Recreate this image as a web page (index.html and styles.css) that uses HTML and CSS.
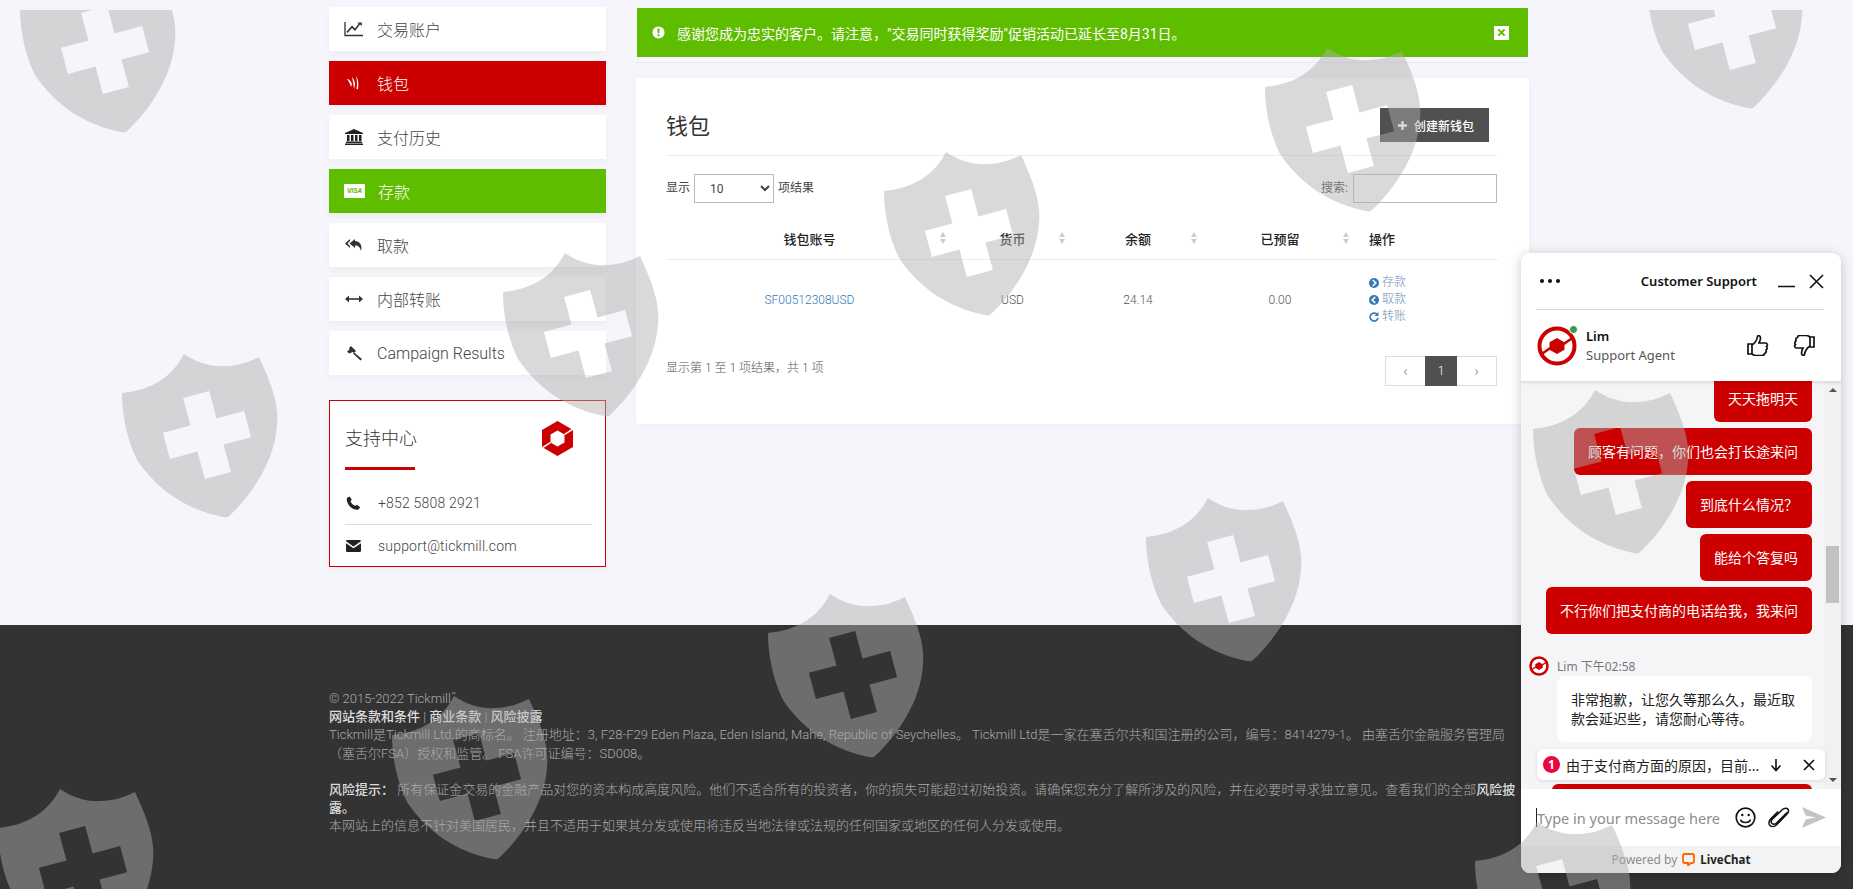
FILE: index.html
```html
<!DOCTYPE html>
<html lang="zh-CN">
<head>
  <meta charset="UTF-8" />
  <title>钱包 - Tickmill</title>
  <link rel="stylesheet" href="styles.css">
</head>
<body>
  <div class="wrap">
    <aside class="side">
      <ul class="menu">
        <li class="menu-item">
          <svg class="menu-icon" viewBox="0 0 20 16"><path d="M1 1v13.5h18" fill="none" stroke="#333" stroke-width="1.3"/><path d="M3.5 12l4.5-5 3 3 5-6.5 1.8 1.6V1.5h-4.5l1.3 1.3-3.6 4.7-3-3-5.6 6.3z" fill="#333"/></svg>
          <span>交易账户</span>
        </li>
        <li class="menu-item is-red">
          <svg class="menu-icon" viewBox="0 0 20 16"><path d="M3 4c2 0 4 2 5 5l-1 3C6 9 5 6 3 4zM8 2c2 2 3 5 3 8l-1 4c-.5-4-1-8-2-12zM12 1c2 3 3 7 2 13h-1.500c.8-5 .5-9-.5-13z" fill="#fff"/></svg>
          <span>钱包</span>
        </li>
        <li class="menu-item">
          <svg class="menu-icon" viewBox="0 0 20 16"><path d="M10 0l9 4v1H1V4zM3 6h2.500v6H3zM7 6h2.500v6H7zM11 6h2.500v6H11zM15 6h2.500v6H15zM2 12.500h16V14H2zM1 14.500h18V16H1z" fill="#222"/></svg>
          <span>支付历史</span>
        </li>
        <li class="menu-item is-green">
          <span class="visa">VISA</span>
          <span>存款</span>
        </li>
        <li class="menu-item">
          <svg class="menu-icon" viewBox="0 0 20 16"><path d="M6 2L1 6.500 6 11V9L3.500 6.500 6 4zM11 2L5.500 6.500 11 11V8.500c3.500 0 5 1.500 6 5.500 1.500-5-.5-9.500-6-10z" fill="#333"/></svg>
          <span>取款</span>
        </li>
        <li class="menu-item">
          <svg class="menu-icon" viewBox="0 0 20 16"><path d="M2 7.200h16v1.600H2z" fill="#333"/><path d="M5 4.500v7L1 8zM15 4.500v7L19 8z" fill="#333"/></svg>
          <span>内部转账</span>
        </li>
        <li class="menu-item">
          <svg class="menu-icon" viewBox="0 0 20 16"><path d="M7 1l5 5-2 2-1-1-4 1.500L3 6.500l2.500-2L5 3zM10 7.500l8 6.500-1.500 1.500-7.500-7z" fill="#333"/></svg>
          <span>Campaign Results</span>
        </li>
      </ul>

      <div class="support">
        <div class="support-head">
          <h3>支持中心</h3>
          <svg class="support-logo" viewBox="0 0 31 35"><path d="M15.500 0L31 9v17l-15.500 9L0 26V9z" fill="#c00"/><path d="M15.500 9.500l7 4v8l-7 4-7-4v-8z" fill="#fff"/><path d="M22 13l9-6v2l-8 5zM9 22l-9 6v-2l8-5z" fill="#fff"/></svg>
        </div>
        <div class="support-line"></div>
        <div class="support-row">
          <svg class="support-icon" viewBox="0 0 14 14"><path d="M3 .5L5.300 3.800 4 5.300c.8 2 2.400 3.700 4.700 4.700l1.500-1.300L13.500 11c-.3 1.500-1.500 2.800-3 2.800C5 13.300.7 9 .2 3.500.2 2 1.500.8 3 .5z" fill="#222"/></svg>
          <span>+852 5808 2921</span>
        </div>
        <div class="support-row">
          <svg class="support-icon" viewBox="0 0 16 13"><path d="M0 1.500A1.500 1.500 0 0 1 1.500 0h13A1.500 1.500 0 0 1 16 1.500L8 7zM0 3.500L8 9l8-5.500v8a1.500 1.500 0 0 1-1.500 1.500h-13A1.500 1.500 0 0 1 0 11.500z" fill="#222"/></svg>
          <span>support@tickmill.com</span>
        </div>
      </div>
    </aside>

    <main class="content">
      <div class="alert-box">
        <div class="alert">
          <svg class="alert-icon" viewBox="0 0 14 14"><circle cx="7" cy="7" r="6.500" fill="#fff"/><path d="M5.800 2.800h2.400l-.3 5H6.100zM5.900 9h2.200v2.100H5.900z" fill="#5dbd00"/></svg>
          <span class="alert-text">感谢您成为忠实的客户。请注意，"交易同时获得奖励"促销活动已延长至8月31日。</span>
          <span class="alert-close">
            <svg viewBox="0 0 10 10"><path d="M1.500 1.500l7 7m0-7l-7 7" stroke="#5dbd00" stroke-width="2.200"/></svg>
          </span>
        </div>
      </div>

      <section class="panel">
        <div class="panel-head">
          <h2>钱包</h2>
          <a class="btn-new">
            <svg viewBox="0 0 10 10"><path d="M3.700 0h2.600v3.700H10v2.600H6.300V10H3.700V6.300H0V3.700h3.700z" fill="#fff"/></svg>
            创建新钱包
          </a>
        </div>

        <div class="controls">
          <label class="length">显示
            <select><option>10</option><option>25</option></select>
            项结果
          </label>
          <label class="search">搜索:
            <input type="text" />
          </label>
        </div>

        <table class="wallets">
          <thead>
            <tr>
              <th class="col-acc">钱包账号<span class="sort"></span></th>
              <th class="col-cur">货币<span class="sort"></span></th>
              <th class="col-bal">余额<span class="sort"></span></th>
              <th class="col-res">已预留<span class="sort"></span></th>
              <th class="col-act">操作</th>
            </tr>
          </thead>
          <tbody>
            <tr>
              <td><a>SF00512308USD</a></td>
              <td>USD</td>
              <td>24.14</td>
              <td>0.00</td>
              <td class="actions">
                <a><svg viewBox="0 0 10 10"><circle cx="5" cy="5" r="5" fill="#337ab7"/><path d="M3.800 2l3 3-3 3" fill="none" stroke="#fff" stroke-width="1.600"/></svg>存款</a>
                <a><svg viewBox="0 0 10 10"><circle cx="5" cy="5" r="5" fill="#337ab7"/><path d="M6.200 2l-3 3 3 3" fill="none" stroke="#fff" stroke-width="1.600"/></svg>取款</a>
                <a><svg viewBox="0 0 10 10"><path d="M8.300 2.600A4 4 0 1 0 9 6" fill="none" stroke="#337ab7" stroke-width="1.700"/><path d="M9.500 0v4h-4z" fill="#337ab7"/></svg>转账</a>
              </td>
            </tr>
          </tbody>
        </table>

        <div class="table-foot">
          <span class="info">显示第 1 至 1 项结果，共 1 项</span>
          <div class="pager">
            <span class="pg-prev">‹</span>
            <span class="pg-cur">1</span>
            <span class="pg-next">›</span>
          </div>
        </div>
      </section>
    </main>
  </div>

  <footer class="foot">
    <p>© 2015-2022 Tickmill<sup>™</sup><br>
    <a>网站条款和条件</a> | <a>商业条款</a> | <a>风险披露</a><br>
    Tickmill是Tickmill Ltd.的商标名。 注册地址：3, F28-F29 Eden Plaza, Eden Island, Mahe, Republic of Seychelles。 Tickmill Ltd是一家在塞舌尔共和国注册的公司，编号：8414279-1。 由塞舌尔金融服务管理局（塞舌尔FSA）授权和监管。 FSA许可证编号：SD008。</p>
    <p><b>风险提示：</b> 所有保证金交易的金融产品对您的资本构成高度风险。他们不适合所有的投资者，你的损失可能超过初始投资。请确保您充分了解所涉及的风险，并在必要时寻求独立意见。查看我们的全部<b>风险披露。</b><br>
    本网站上的信息不针对美国居民，并且不适用于如果其分发或使用将违反当地法律或法规的任何国家或地区的任何人分发或使用。</p>
  </footer>

  <!-- chat widget -->
  <div class="chat">
    <div class="chat-top">
      <div class="chat-bar">
        <span class="dots"><i></i><i></i><i></i></span>
        <span class="chat-title">Customer Support</span>
        <span class="chat-win">
          <svg width="17" height="14" viewBox="0 0 17 14"><path d="M0 12.500h17" stroke="#111" stroke-width="1.600"/></svg>
          <svg width="15" height="15" viewBox="0 0 15 15"><path d="M1 1l13 13M14 1L1 14" stroke="#111" stroke-width="1.600"/></svg>
        </span>
      </div>
      <div class="agent">
        <span class="agent-pic">
          <svg viewBox="0 0 40 40"><circle cx="20" cy="20" r="17.500" fill="#fff" stroke="#c00" stroke-width="4"/><path d="M20 12l7.500 4.300v7.400L20 28l-7.500-4.300v-7.400z" fill="#c00"/><path d="M26 17l10-7 1.500 2-10 7zM14 23l-10 7-1.500-2 10-7z" fill="#c00"/></svg>
          <i class="online"></i>
        </span>
        <div class="agent-name">
          <b>Lim</b>
          <span>Support Agent</span>
        </div>
        <span class="rate">
          <svg width="22" height="21" viewBox="0 0 22 21"><path d="M1 9h4v10H1zM5 10c3-2 5-5 5.500-8.500.3-1.500 3-1 3 1.500 0 2-1 4-1.500 5h6.500c2 0 2.500 2.500 1 3.500 1 1 .8 3-.5 3.500.5 1.500 0 3-1.500 3.500 0 1.500-1 2-2.500 2H9c-2 0-3-1-4-1.500" fill="none" stroke="#111" stroke-width="1.700"/></svg>
          <svg width="22" height="21" viewBox="0 0 22 21"><path d="M21 12h-4V2h4zM17 11c-3 2-5 5-5.500 8.500-.3 1.500-3 1-3-1.500 0-2 1-4 1.500-5H3.500c-2 0-2.500-2.500-1-3.500-1-1-.8-3 .5-3.500C2.500 4.500 3 3 4.500 2.500 4.500 1 5.500.5 7 .5h6c2 0 3 1 4 1.500" fill="none" stroke="#111" stroke-width="1.700"/></svg>
        </span>
      </div>
    </div>

    <div class="chat-body">
      <div class="msgs">
        <div class="bubble">天天拖明天</div>
        <div class="bubble">顾客有问题，你们也会打长途来问</div>
        <div class="bubble">到底什么情况？</div>
        <div class="bubble">能给个答复吗</div>
        <div class="bubble">不行你们把支付商的电话给我，我来问</div>
        <div class="msg-meta">
          <svg viewBox="0 0 40 40"><circle cx="20" cy="20" r="17" fill="#fff" stroke="#c00" stroke-width="5"/><path d="M20 12l7.500 4.300v7.400L20 28l-7.500-4.300v-7.400z" fill="#c00"/><path d="M26 17l10-7 1.500 2-10 7zM14 23l-10 7-1.500-2 10-7z" fill="#c00"/></svg>
          <span>Lim 下午02:58</span>
        </div>
        <div class="bubble-in">非常抱歉，让您久等那么久，最近取款会延迟些，请您耐心等待。</div>
        <div class="bubble bubble-last">由于支付商方面的原因，目前款项</div>
      </div>
      <div class="scroll">
        <i class="scroll-up"></i>
        <i class="scroll-thumb"></i>
        <i class="scroll-down"></i>
      </div>
      <div class="pill">
        <span class="pill-num">1</span>
        <span class="pill-text">由于支付商方面的原因，目前...</span>
        <svg width="12" height="14" viewBox="0 0 12 14"><path d="M6 1v11M1.500 7.500L6 12.500l4.500-5" fill="none" stroke="#111" stroke-width="1.600"/></svg>
        <svg width="12" height="12" viewBox="0 0 12 12"><path d="M1 1l10 10M11 1L1 11" stroke="#111" stroke-width="1.600"/></svg>
      </div>
    </div>

    <div class="composer">
      <span class="caret"></span>
      <span class="holder">Type in your message here</span>
      <svg width="21" height="21" viewBox="0 0 21 21"><circle cx="10.500" cy="10.500" r="9.300" fill="none" stroke="#111" stroke-width="1.700"/><circle cx="7.300" cy="8" r="1.200" fill="#111"/><circle cx="13.700" cy="8" r="1.200" fill="#111"/><path d="M5.500 12.500c1 4 9 4 10 0" fill="none" stroke="#111" stroke-width="1.500"/></svg>
      <svg width="22" height="21" viewBox="0 0 22 21"><path d="M19 5.500L8.500 16c-1.500 1.500-3.500 1.500-4.500.5s-1-3 .5-4.500L14.500 2.500c2-2 4.500-1.500 5.300-.5s1 3-.8 5L9 17.500C6.500 20 3.500 20 2 18.500s-1.500-4.500 1-7L10 4.500" fill="none" stroke="#111" stroke-width="1.500"/></svg>
      <svg class="send" width="24" height="21" viewBox="0 0 24 21"><path d="M0 0l24 10.500L0 21l3.500-8.500L14 10.500 3.500 8.500z" fill="#c4c4c4"/></svg>
    </div>
    <div class="powered">
      <span>Powered by</span>
      <svg width="13" height="13" viewBox="0 0 13 13"><path d="M2.500 1h8A1.500 1.500 0 0 1 12 2.500v6A1.500 1.500 0 0 1 10.500 10H9l-3 2.500V10H2.500A1.500 1.500 0 0 1 1 8.500v-6A1.500 1.500 0 0 1 2.500 1z" fill="none" stroke="#f60" stroke-width="1.800"/></svg>
      <b>LiveChat</b>
    </div>
  </div>

  <!-- watermark over the whole page -->
  <svg class="watermark" viewBox="0 10 1853 879">
    <defs>
      <path id="shield" fill-rule="evenodd" d="M-85-42C-55-45-35-58-23-81-10-72 5-68 18-69 30-69 42-73 52-78 65-50 72-30 70-10 68 25 45 60 22 81 20 83 18 82 16 82-20 75-50 55-70 25-80 5-85-20-85-42ZM-23.900-37.100L2.200-44.100 9.500-16.500 37.100-23.900 44.100 2.200 16.500 9.500 23.900 37.100-2.200 44.100-9.500 16.500-37.100 23.900-44.100-2.200-16.500-9.500Z"/>
    </defs>
    <use href="#shield" x="105" y="50"/>
    <use href="#shield" x="1732" y="26"/>
    <use href="#shield" x="1350" y="129"/>
    <use href="#shield" x="969" y="233"/>
    <use href="#shield" x="588" y="334"/>
    <use href="#shield" x="207" y="435"/>
    <use href="#shield" x="1618" y="471"/>
    <use href="#shield" x="1231" y="579"/>
    <use href="#shield" x="853" y="675"/>
    <use href="#shield" x="477" y="777"/>
    <use href="#shield" x="83" y="870"/>
    <use href="#shield" x="1560" y="903"/>
  </svg>
</body>
</html>
```

FILE: styles.css
```css
html, body {
  margin: 0;
  height: 889px;
  overflow: hidden;
}

body {
  position: relative;
  font-family: Roboto, "Noto Sans CJK SC", sans-serif;
  font-weight: 300;
  background-color: #f5f5fb;
  color: #333;
}

.wrap {
  display: flex;
  gap: 30px;
  height: 625px;
  padding: 7px 0 0 329px;
  box-sizing: border-box;
}

/* sidebar */
.side {
  width: 277px;
}

.menu {
  list-style: none;
  margin: 0;
  padding: 0;
}

.menu-item {
  display: flex;
  align-items: center;
  height: 44px;
  margin-bottom: 10px;
  padding-left: 15px;
  background: white;
  font-size: 16px;
  color: #444;
  box-shadow: 0 3px 6px rgba(0,0,0,0.04);
}

.menu-icon {
  width: 20px;
  height: 16px;
  margin-right: 13px;
}

.menu-item.is-red {
  background-color: #c00;
  color: white;
}

.menu-item.is-green {
  background-color: #5fbd00;
  color: white;
}

.visa {
  width: 21px;
  height: 14px;
  margin-right: 13px;
  background: white;
  color: #5fbd00;
  font-size: 7px;
  font-weight: 700;
  font-style: italic;
  line-height: 14px;
  text-align: center;
}

.support {
  margin-top: 25px;
  height: 167px;
  box-sizing: border-box;
  padding: 20px 13px 0 15px;
  background: white;
  border: 1px solid #c00;
  box-shadow: 0 3px 6px rgba(0,0,0,0.04);
}

.support-head {
  display: flex;
  justify-content: space-between;
  padding-right: 19px;
}

.support-head h3 {
  margin: 0;
  font-size: 18px;
  font-weight: 300;
  line-height: 35px;
  color: #333;
}

.support-logo {
  width: 31px;
  height: 35px;
}

.support-line {
  width: 70px;
  height: 3px;
  margin-top: 11px;
  margin-bottom: 12px;
  background-color: #c00;
}

.support-row {
  display: flex;
  align-items: center;
  height: 42px;
  font-size: 14px;
  color: #444;
  letter-spacing: 0.2px;
}

.support-row:first-of-type,
.support-line + .support-row {
  border-bottom: 1px solid #ddd;
}

.support-icon {
  width: 15px;
  height: 14px;
  margin: 0 17px 0 1px;
}

/* main column */
.content {
  width: 893px;
}

.alert-box {
  padding: 1px 1px 5px;
  border-bottom: 1px solid #e8e8ee;
}

.alert {
  display: flex;
  align-items: center;
  height: 49px;
  padding: 0 19px 0 15px;
  background-color: #5fbd00;
  color: white;
  font-size: 14px;
  font-weight: 400;
}

.alert-icon {
  width: 13px;
  height: 13px;
  margin-right: 12px;
}

.alert-text {
  flex: 1;
}

.alert-close {
  display: flex;
  align-items: center;
  justify-content: center;
  width: 15px;
  height: 14px;
  background: white;
}

.alert-close svg {
  width: 9px;
  height: 9px;
}

.panel {
  margin-top: 15px;
  padding: 30px 32px 38px 30px;
  background: white;
  border-radius: 2px;
  box-shadow: 0 0 6px rgba(0,0,0,0.04);
}

.panel-head {
  display: flex;
  justify-content: space-between;
  height: 47px;
  border-bottom: 1px solid #eee;
}

.panel-head h2 {
  margin: 0;
  font-size: 22px;
  font-weight: 400;
  line-height: 38px;
  color: #333;
}

.btn-new {
  display: flex;
  align-items: center;
  height: 34px;
  margin-right: 8px;
  padding: 0 15px 0 18px;
  background-color: #505050;
  color: white;
  font-size: 12px;
  font-weight: 500;
}

.btn-new svg {
  width: 9px;
  height: 9px;
  margin-right: 7px;
}

.controls {
  display: flex;
  justify-content: space-between;
  margin-top: 18px;
  font-size: 12px;
  font-weight: 400;
  color: #444;
}

.controls select,
.controls input {
  box-sizing: border-box;
  height: 29px;
  border: 1px solid #bbb;
  background: white;
  font-family: inherit;
  font-size: 12px;
  color: #444;
  vertical-align: middle;
}

.controls select {
  width: 80px;
  margin: 0 1px;
  padding-left: 11px;
}

.controls input {
  width: 144px;
  margin-left: 2px;
}

.wallets {
  width: 832px;
  margin-top: 14px;
  border-collapse: collapse;
  table-layout: fixed;
  font-size: 12px;
}

.wallets th {
  position: relative;
  height: 40px;
  border-bottom: 1px solid #eee;
  font-size: 13px;
  font-weight: 500;
  color: #222;
}

.col-acc { width: 285px; }
.col-cur { width: 117px; }
.col-bal { width: 130px; }
.col-res { width: 150px; }

.wallets th.col-act {
  text-align: left;
  padding-left: 13px;
}

.sort {
  position: absolute;
  right: 7px;
  top: 15px;
  width: 0;
  border-left: 3px solid transparent;
  border-right: 3px solid transparent;
  border-bottom: 5px solid #ccc;
}

.sort::after {
  content: "";
  position: absolute;
  left: -3px;
  top: 7px;
  border-left: 3px solid transparent;
  border-right: 3px solid transparent;
  border-top: 5px solid #ccc;
}

.wallets td {
  height: 79px;
  padding: 0;
  text-align: center;
  color: #555;
}

.wallets a {
  color: #337ab7;
}

.wallets td.actions {
  text-align: left;
  padding-left: 13px;
  line-height: 17px;
}

.actions a {
  display: flex;
  align-items: center;
  color: #6f93b5;
}

.actions svg {
  width: 10px;
  height: 10px;
  margin-right: 3px;
}

.table-foot {
  display: flex;
  justify-content: space-between;
  margin-top: 17px;
  font-size: 12px;
  color: #555;
}

.info {
  margin-top: 2px;
}

.pager {
  display: flex;
  height: 30px;
  box-sizing: border-box;
  border: 1px solid #ddd;
  line-height: 28px;
  text-align: center;
}

.pg-prev { width: 39px; color: #777; font-size: 14px; }
.pg-next { width: 39px; color: #777; font-size: 14px; }

.pg-cur {
  width: 32px;
  margin-top: -1px;
  height: 30px;
  line-height: 30px;
  background-color: #505050;
  color: white;
}

/* footer */
.foot {
  height: 264px;
  box-sizing: border-box;
  padding: 65px 325px 0 329px;
  background-color: #333;
  color: #aaa;
  font-size: 13px;
  line-height: 18.2px;
}

.foot p {
  margin: 0 0 18.200px;
}

.foot a,
.foot b {
  color: #ddd;
  font-weight: 500;
}

.foot sup {
  font-size: 8px;
  line-height: 0;
}

/* chat widget */
.chat {
  position: absolute;
  left: 1521px;
  top: 253px;
  width: 320px;
  height: 620px;
  display: flex;
  flex-direction: column;
  overflow: hidden;
  border-radius: 9px;
  background: white;
  box-shadow: 0 2px 12px rgba(0,0,0,0.22);
  font-family: "Noto Sans", "Noto Sans CJK SC", sans-serif;
  font-weight: 400;
  color: #111;
}

.chat-top {
  height: 128px;
  padding: 0 17px 0 15px;
  box-sizing: border-box;
  position: relative;
  z-index: 1;
  box-shadow: 0 1px 4px rgba(0,0,0,0.15);
  background: white;
}

.chat-bar {
  display: flex;
  align-items: center;
  height: 56px;
  border-bottom: 1px solid #d5d5d8;
}

.dots {
  display: flex;
  gap: 4px;
  width: 105px;
  padding-left: 4px;
}

.dots i {
  width: 4px;
  height: 4px;
  border-radius: 50%;
  background-color: #111;
}

.chat-title {
  font-size: 13px;
  font-weight: 600;
  width: 128px;
  text-align: center;
}

.chat-win {
  display: flex;
  align-items: center;
  gap: 14px;
  margin-left: 19px;
}

.agent {
  display: flex;
  align-items: center;
  height: 71px;
}

.agent-pic {
  position: relative;
  width: 40px;
  height: 40px;
  margin: 0 9px 0 1px;
}

.agent-pic svg {
  width: 40px;
  height: 40px;
}

.online {
  position: absolute;
  right: -1px;
  top: -1px;
  width: 7px;
  height: 7px;
  border-radius: 50%;
  background-color: #2a9d4e;
  border: 1px solid white;
}

.agent-name {
  display: flex;
  flex-direction: column;
  flex: 1;
  font-size: 13px;
  line-height: 19px;
}

.agent-name b {
  font-weight: 600;
}

.agent-name span {
  color: #555;
}

.rate {
  display: flex;
  gap: 24px;
  margin-right: 9px;
}

.chat-body {
  position: relative;
  flex: 1;
  display: flex;
  min-height: 0;
  background-color: #f5f5f7;
}

.msgs {
  flex: 1;
  display: flex;
  flex-direction: column;
  align-items: flex-end;
  margin-top: -6px;
  padding-right: 12px;
  font-size: 14px;
}

.bubble {
  flex: none;
  height: 47px;
  margin-bottom: 6px;
  padding: 0 14px;
  border-radius: 6px;
  background-color: #c00;
  color: white;
  font-size: 14px;
  line-height: 47px;
}

.msg-meta {
  flex: none;
  align-self: flex-start;
  display: flex;
  align-items: center;
  gap: 8px;
  height: 20px;
  margin: 16px 0 0 8px;
  font-size: 12px;
  color: #777;
}

.msg-meta svg {
  width: 20px;
  height: 20px;
}

.bubble-in {
  flex: none;
  width: 255px;
  height: 66px;
  box-sizing: border-box;
  padding: 14px 14px 0;
  border-radius: 8px;
  background: white;
  color: #222;
  font-size: 14px;
  line-height: 19px;
}

.bubble-last {
  width: 260px;
  box-sizing: border-box;
  margin-top: 42px;
}

.scroll {
  flex: none;
  width: 17px;
  background-color: #f1f1f1;
  display: flex;
  flex-direction: column;
  align-items: center;
  justify-content: space-between;
  padding: 7px 0;
  box-sizing: border-box;
  position: relative;
}

.scroll-up {
  width: 0;
  border-left: 4px solid transparent;
  border-right: 4px solid transparent;
  border-bottom: 4px solid #555;
}

.scroll-down {
  width: 0;
  border-left: 4px solid transparent;
  border-right: 4px solid transparent;
  border-top: 4px solid #555;
}

.scroll-thumb {
  position: absolute;
  top: 165px;
  left: 2px;
  width: 13px;
  height: 57px;
  background-color: #c1c1c1;
}

.pill {
  position: absolute;
  left: 16px;
  top: 368px;
  width: 288px;
  height: 31px;
  box-sizing: border-box;
  display: flex;
  align-items: center;
  padding: 0 10px 0 6px;
  border-radius: 6px;
  background: white;
  box-shadow: 0 1px 4px rgba(0,0,0,0.12);
}

.pill-num {
  flex: none;
  width: 17px;
  height: 17px;
  border-radius: 50%;
  background-color: #e8083e;
  color: white;
  font-size: 12px;
  font-weight: 700;
  line-height: 17px;
  text-align: center;
}

.pill-text {
  flex: 1;
  margin-left: 6px;
  font-size: 14px;
  color: #222;
  white-space: nowrap;
}

.pill svg + svg {
  margin-left: 21px;
}

.composer {
  position: relative;
  flex: none;
  display: flex;
  align-items: center;
  height: 57px;
  padding-left: 15px;
  background: white;
  box-sizing: border-box;
}

.caret {
  width: 1px;
  height: 19px;
  background-color: #222;
}

.holder {
  width: 198px;
  font-size: 14.500px;
  color: #8d8d8d;
}

.composer svg + svg {
  margin-left: 12px;
}

.powered {
  flex: none;
  display: flex;
  align-items: center;
  justify-content: center;
  gap: 5px;
  height: 27px;
  background-color: #f3f3f3;
  font-size: 12px;
  color: #8d8d8d;
}

.powered b {
  font-weight: 700;
  color: #222;
  font-size: 11.500px;
}

/* shields lie over everything, chat included */
.watermark {
  position: absolute;
  left: 0;
  top: 10px;
  width: 1853px;
  height: 879px;
  pointer-events: none;
  fill: rgb(175,175,175);
  fill-opacity: 0.47;
}
```
